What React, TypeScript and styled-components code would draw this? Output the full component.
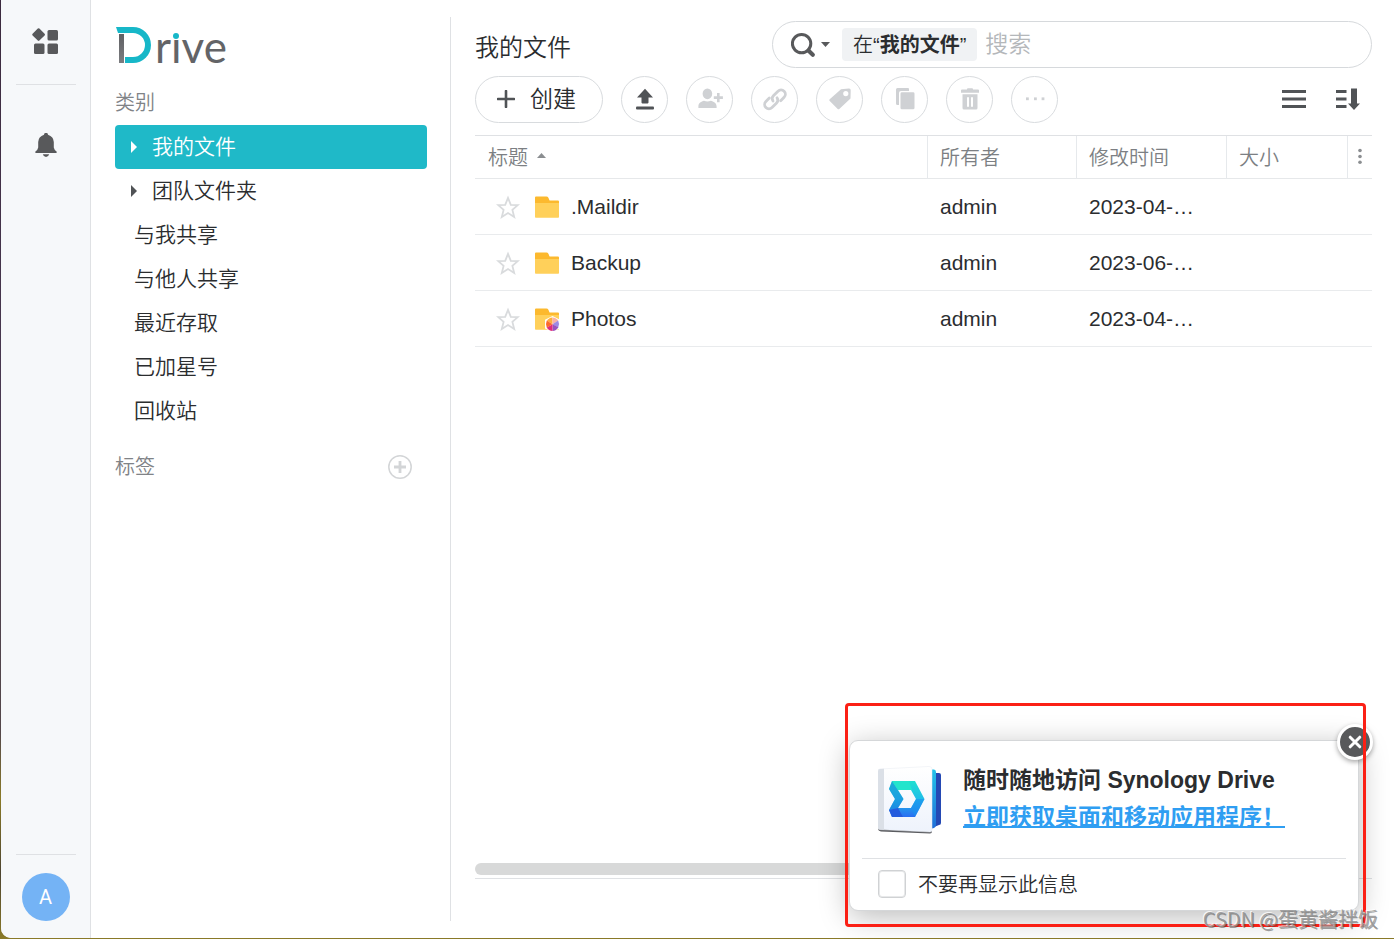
import React, { useState } from "react";
import styled, { createGlobalStyle } from "styled-components";

const GlobalStyle = createGlobalStyle`
  *, *::before, *::after { box-sizing: border-box; }
  body {
    margin: 0;
    background: linear-gradient(180deg, #3b2a3e 0%, #4a3a52 45%, #54484a 78%, #8a7a28 85%, #4d4430 93%, #8a7a28 100%);
    color: #2b2d2f;
    font-family: "Liberation Sans", "Noto Sans CJK SC", sans-serif;
    font-size: 21px;
    font-weight: 350;
  }
  button, input { font: inherit; color: inherit; }
  button { padding: 0; border: 0; background: none; cursor: pointer; }
  button:disabled { cursor: default; }
  svg { display: block; flex: none; }
`;

const Desktop = styled.div`
  display: flex;
  min-height: 100vh;
  padding: 0 0 1px 1px;
`;

const Window = styled.div`
  position: relative;
  display: flex;
  flex: 1;
  min-width: 0;
  overflow: hidden;
  background: #fff;
  border-bottom-left-radius: 10px;
`;

const Rail = styled.nav`
  display: flex;
  flex: none;
  flex-direction: column;
  align-items: center;
  width: 90px;
  padding: 28px 0 17px;
  background: #f6f8fa;
  border-right: 1px solid #dfe1e4;
`;

const RailButton = styled.button`
  display: grid;
  place-items: center;
`;

const RailDivider = styled.hr<{ $below: number }>`
  width: 60px;
  margin: 0 0 ${(p) => p.$below}px;
  border: 0;
  border-top: 1px solid #dfe1e4;
`;

const RailTop = styled.div`
  display: flex;
  flex: 1;
  flex-direction: column;
  align-items: center;
  ${RailButton}:first-child { margin-bottom: 30px; }
`;

const Avatar = styled.button`
  width: 48px;
  height: 48px;
  border-radius: 50%;
  background: #74b3f5;
  color: #fff;
  font-family: Roboto, "Liberation Sans", sans-serif;
  font-size: 20px;
  font-weight: 400;
`;

const Sidebar = styled.aside`
  flex: none;
  width: 360px;
  margin: 17px 0;
  padding: 8px 23px 0 24px;
  border-right: 1px solid #dfe1e4;
`;

const Logo = styled.svg`
  width: 116px;
  height: 44px;
  overflow: visible;
`;

const SectionLabel = styled.h2`
  margin: 0;
  color: #808387;
  font-size: 20px;
  font-weight: 350;
  line-height: 44px;
`;

const CategoryLabel = styled(SectionLabel)`
  margin-top: 12px;
`;

const NavList = styled.ul`
  margin: 0 0 12px;
  padding: 0;
  list-style: none;
`;

const NavItem = styled.button<{ $active?: boolean; $expandable?: boolean }>`
  display: flex;
  gap: 15px;
  align-items: center;
  width: 100%;
  height: 44px;
  padding-left: ${(p) => (p.$expandable ? 16 : 19)}px;
  border-radius: 4px;
  background: ${(p) => (p.$active ? "#1fb9c8" : "transparent")};
  color: ${(p) => (p.$active ? "#fff" : "inherit")};
  text-align: left;
  svg { fill: ${(p) => (p.$active ? "#fff" : "#505356")}; }
`;

const ButtonText = styled.span`
  padding-bottom: 4px;
`;

const TagHeader = styled.div`
  display: flex;
  align-items: center;
  justify-content: space-between;
  padding-right: 15px;
`;

const Main = styled.main`
  display: flex;
  flex: 1;
  flex-direction: column;
  min-width: 0;
  padding: 21px 22px 59px 24px;
`;

const TitleBar = styled.header`
  display: flex;
  align-items: center;
  justify-content: space-between;
  gap: 24px;
`;

const Title = styled.h1`
  margin: 0;
  padding-top: 6px;
  font-size: 24px;
  font-weight: 350;
  line-height: 41px;
  white-space: nowrap;
`;

const Search = styled.form`
  display: flex;
  align-items: center;
  flex: 0 1 600px;
  min-width: 0;
  height: 47px;
  padding: 0 18px;
  border: 1px solid #d6d9dc;
  border-radius: 24px;
`;

const SearchMode = styled.button`
  display: flex;
  gap: 4px;
  align-items: center;
`;

const Scope = styled.span`
  margin-left: 12px;
  padding: 1px 11px 0;
  border-radius: 4px;
  background: #f0f2f4;
  font-size: 20px;
  line-height: 32px;
  white-space: nowrap;
  b { font-weight: 700; }
`;

const SearchInput = styled.input`
  flex: 1;
  min-width: 0;
  padding: 0 8px;
  border: 0;
  outline: 0;
  background: none;
  font-size: 23px;
  &::placeholder { color: #b4b7ba; opacity: 1; }
`;

const Toolbar = styled.div`
  display: flex;
  gap: 18px;
  align-items: center;
  margin: 8px 0 12px;
`;

const ToolButton = styled.button`
  display: grid;
  place-items: center;
  flex: none;
  width: 47px;
  height: 47px;
  border: 1px solid #d8dbde;
  border-radius: 50%;
  color: #505356;
  &:disabled { color: #cfd1d4; }
`;

const CreateButton = styled.button`
  display: flex;
  gap: 15px;
  align-items: center;
  height: 47px;
  padding: 0 26px 2px 21px;
  border: 1px solid #d8dbde;
  border-radius: 24px;
  font-size: 23px;
`;

const ViewButtons = styled.div`
  display: flex;
  gap: 30px;
  margin-left: auto;
  padding-right: 12px;
`;

const FilePane = styled.section`
  flex: 1;
  min-width: 0;
`;

const FileTable = styled.table`
  width: 100%;
  border-spacing: 0;
  border-top: 1px solid #dfe1e4;
  table-layout: fixed;
`;

const Col = styled.col<{ $width?: number }>`
  width: ${(p) => (p.$width ? `${p.$width}px` : "auto")};
`;

const HeadCell = styled.th`
  height: 43px;
  padding: 0 0 2px 12px;
  border-right: 1px solid #e6e9ec;
  border-bottom: 1px solid #e6e8ea;
  color: #7c7f83;
  font-size: 20px;
  font-weight: 350;
  text-align: left;
  &:first-child { padding-left: 13px; }
  &:last-child { padding-left: 9px; border-right: 0; }
`;

const SortButton = styled.button`
  display: flex;
  gap: 9px;
  align-items: center;
  svg { margin-bottom: 2px; }
`;

const ColumnsButton = styled.button`
  display: block;
`;

const Cell = styled.td`
  height: 56px;
  padding: 0 12px;
  overflow: hidden;
  border-bottom: 1px solid #e9ebed;
  text-overflow: ellipsis;
  white-space: nowrap;
  &:first-child { padding-left: 21px; }
`;

const FileName = styled.div`
  display: flex;
  align-items: center;
`;

const StarButton = styled.button`
  margin-right: 15px;
`;

const FileLabel = styled.span`
  margin-left: 11px;
`;

const ScrollTrack = styled.div`
  height: 16px;
  border-bottom: 1px solid #dfe1e4;
`;

const ScrollThumb = styled.div`
  width: 84%;
  height: 12px;
  border-radius: 6px;
  background: #d8d9d9;
`;

const Popup = styled.aside`
  position: absolute;
  right: 35px;
  bottom: 27px;
  width: 510px;
  padding: 0 12px;
  border: 1px solid #d5d7d9;
  border-radius: 9px;
  background: #fff;
  box-shadow: 0 6px 30px rgba(0, 0, 0, 0.27);
`;

const PopupBody = styled.div`
  display: flex;
  gap: 20px;
  padding: 21px 16px 22px;
  border-bottom: 1px solid #dfe1e4;
`;

const PopupText = styled.div`
  font-size: 23px;
  font-weight: 700;
  line-height: 37px;
  white-space: nowrap;
  p { margin: 0; }
  a {
    color: #2f9ef2;
    text-decoration: underline;
    text-decoration-thickness: 2px;
    text-underline-offset: 1px;
    text-decoration-skip-ink: none;
  }
`;

const DismissLabel = styled.label`
  display: flex;
  gap: 12px;
  align-items: center;
  height: 51px;
  padding: 0 0 2px 16px;
  font-size: 20px;
`;

const CheckBox = styled.input`
  appearance: none;
  width: 28px;
  height: 28px;
  margin: 0;
  border: 1px solid #d0d2d4;
  border-radius: 4px;
  background: #fff;
  box-shadow: inset 0 0 0 1px #e8e9ea;
  &:checked { background: #1fb9c8; }
`;

const CloseButton = styled.button`
  position: absolute;
  top: -17px;
  right: -15px;
  display: grid;
  place-items: center;
  width: 36px;
  height: 36px;
  border: 3px solid #fff;
  border-radius: 50%;
  background: #58595b;
  box-shadow: 0 2px 5px rgba(0, 0, 0, 0.35);
`;

const Highlight = styled.div`
  position: absolute;
  right: 28px;
  bottom: 11px;
  width: 521px;
  height: 224px;
  border: 3px solid #fb2015;
  border-radius: 4px;
  pointer-events: none;
`;

const Watermark = styled.span`
  position: absolute;
  right: 16px;
  bottom: 5px;
  color: rgba(150, 150, 150, 0.85);
  font-family: "Noto Sans CJK SC", sans-serif;
  font-size: 20px;
  line-height: 28px;
  text-shadow: 1px 1px 0 rgba(70, 70, 70, 0.5), -1px -1px 0 rgba(255, 255, 255, 0.8);
  pointer-events: none;
`;

const DriveLogo = () => (
  <Logo viewBox="115 25 116 44" role="img" aria-label="Drive">
    <defs>
      <linearGradient id="stem" x1="0" y1="0" x2="0" y2="1">
        <stop offset="0" stopColor="#606164" />
        <stop offset="1" stopColor="#7b7c80" />
      </linearGradient>
    </defs>
    <rect x="119" y="34" width="5" height="29" fill="url(#stem)" />
    <path d="M116 27H133A18 18 0 0 1 133 63H125V57H133A12 12 0 0 0 133 33H118Z" fill="#17b7c8" />
    <text x="155" y="63" fill="#636467" fontFamily="Lato" fontSize="44" fontWeight="400">rive</text>
    <rect x="168" y="26" width="14" height="13" fill="#fff" />
    <circle cx="176" cy="36" r="3" fill="#17b7c8" />
  </Logo>
);

const AppsIcon = () => (
  <svg width="28" height="26" viewBox="0 0 28 26" fill="#58595b">
    <path d="M5.8.6Q6.6-.2 7.4.6L12.6 5.8Q13.4 6.6 12.6 7.4L7.4 12.6Q6.6 13.4 5.8 12.6L.6 7.4Q-.2 6.6.6 5.8Z" />
    <rect x="15.5" y="2" width="10.5" height="10.5" rx="1.5" />
    <rect x="2" y="15.5" width="10.5" height="10.5" rx="1.5" />
    <rect x="15.5" y="15.5" width="10.5" height="10.5" rx="1.5" />
  </svg>
);

const BellIcon = () => (
  <svg width="22" height="24" viewBox="0 0 22 24" fill="#58595b">
    <path d="M9 1.8A2 2 0 0 1 13 1.8Q18.6 3.6 18.8 9V14.5Q19.2 17 21.6 18.4V20H.4V18.4Q2.8 17 3.2 14.5V9Q3.4 3.6 9 1.8Z" />
    <path d="M7.8 21.2H14.2Q13.4 23.9 11 23.9Q8.6 23.9 7.8 21.2Z" />
  </svg>
);

const Caret = () => (
  <svg width="6" height="12" viewBox="0 0 6 12"><path d="M0 0L6 6L0 12Z" /></svg>
);

const AddTagIcon = () => (
  <svg width="24" height="24" viewBox="0 0 24 24" fill="none" stroke="#d3d5d7">
    <circle cx="12" cy="12" r="11.2" strokeWidth="1.5" />
    <path d="M12 6V18M6 12H18" strokeWidth="2.8" />
  </svg>
);

const SearchIcon = () => (
  <svg width="26" height="26" viewBox="0 0 26 26" fill="none" stroke="#58595b">
    <circle cx="10.6" cy="11.6" r="9.2" strokeWidth="3" />
    <path d="M17.4 18.6L21.8 22.8" strokeWidth="4.2" strokeLinecap="round" />
  </svg>
);

const DownIcon = () => (
  <svg width="9" height="5" viewBox="0 0 9 5"><path d="M0 0H9L4.5 5Z" fill="#58595b" /></svg>
);

const PlusIcon = () => (
  <svg width="18" height="18" viewBox="0 0 18 18">
    <path d="M9 1V17M1 9H17" stroke="#505356" strokeWidth="2.6" strokeLinecap="round" />
  </svg>
);

const UploadIcon = () => (
  <svg width="24" height="24" viewBox="0 0 24 24" fill="currentColor">
    <path d="M12 .8L20 9.4H15.5V14.6Q15.5 15.4 14.7 15.4H9.3Q8.5 15.4 8.5 14.6V9.4H4Z" />
    <rect x="3" y="18.5" width="18" height="2.9" rx="1" />
  </svg>
);

const ShareIcon = () => (
  <svg width="26" height="24" viewBox="0 0 26 24" fill="currentColor">
    <ellipse cx="10.4" cy="5.8" rx="4.8" ry="5.4" />
    <path d="M1.4 20V18.5C1.4 14.8 4.4 13.6 7 12.8Q10.4 14.2 13.8 12.8C16.4 13.6 19.6 14.8 19.6 18.5V20Z" />
    <path d="M21.3 5V14.2M16.8 9.6H25.9" stroke="currentColor" strokeWidth="2.6" />
  </svg>
);

const LinkIcon = () => (
  <svg width="24" height="24" viewBox="0 0 24 24" fill="none" stroke="currentColor" strokeWidth="2.8" strokeLinecap="round">
    <path d="M10 13C8.7 11.1 9 9.2 10.4 7.8L15 3.2A4.3 4.3 0 0 1 21.1 9.3L17.7 12.7" />
    <path d="M14 9.8C15.3 11.7 15 13.6 13.6 15L9 19.6A4.3 4.3 0 0 1 2.9 13.5L6.3 10.1" />
  </svg>
);

const TagIcon = () => (
  <svg width="24" height="24" viewBox="0 0 24 24">
    <path fill="currentColor" fillRule="evenodd" d="M13 1.3L20.8.4Q22.8.2 22.7 2.2L22.5 10.5L11.3 21Q10.5 21.6 9.7 20.9L1.5 12.8Q.9 12 1.7 11.3ZM17.8 3A2.6 2.6 0 1 0 17.8 8.2A2.6 2.6 0 1 0 17.8 3Z" />
  </svg>
);

const CopyIcon = () => (
  <svg width="24" height="24" viewBox="0 0 24 24" fill="currentColor">
    <path d="M4.5 0H15Q16 0 16 1V3H8Q6 3 6 5V17H4.5Q3 17 3 15.5V1.5Q3 0 4.5 0Z" />
    <rect x="7.5" y="4.3" width="14" height="17" rx="1.4" />
  </svg>
);

const TrashIcon = () => (
  <svg width="24" height="24" viewBox="0 0 24 24" fill="currentColor">
    <path d="M9 1.6V1Q9 .2 10 .2H14Q15 .2 15 1V1.6H20Q21 1.6 21 2.6V4.8H3V2.6Q3 1.6 4 1.6Z" />
    <path fillRule="evenodd" d="M4.5 6.2H19.5V20Q19.5 21.5 18 21.5H6Q4.5 21.5 4.5 20ZM9 9.2V18.7H11V9.2ZM13 9.2V18.7H15V9.2Z" />
  </svg>
);

const MoreIcon = () => (
  <svg width="24" height="24" viewBox="0 0 24 24" fill="currentColor">
    <rect x="3" y="9.4" width="2.8" height="2.8" />
    <rect x="11" y="9.4" width="2.8" height="2.8" />
    <rect x="18.6" y="9.4" width="2.8" height="2.8" />
  </svg>
);

const ListIcon = () => (
  <svg width="24" height="24" viewBox="0 0 24 24" fill="#505356">
    <path d="M0 2H24V5H0ZM0 9.5H24V12.5H0ZM0 17H24V20H0Z" />
  </svg>
);

const SortIcon = () => (
  <svg width="24" height="24" viewBox="0 0 24 24" fill="#505356">
    <path d="M0 2H10.5V5H0ZM0 9.5H10.5V12.5H0ZM0 17H10.5V20H0Z" />
    <path d="M15 .5H21V15.5H24L18 22L12 15.5H15Z" />
  </svg>
);

const SortUp = () => (
  <svg width="9" height="5" viewBox="0 0 9 5"><path d="M0 5H9L4.5 0Z" fill="#8b8e91" /></svg>
);

const DotsIcon = () => (
  <svg width="6" height="16" viewBox="0 0 6 16" fill="#8b8e91">
    <circle cx="3" cy="2.5" r="1.8" />
    <circle cx="3" cy="8.5" r="1.8" />
    <circle cx="3" cy="14.2" r="1.8" />
  </svg>
);

const StarIcon = () => (
  <svg width="24" height="24" viewBox="0 0 24 24" fill="none" stroke="#d9dbdd" strokeWidth="1.8">
    <path d="M12 2.8L14.8 9.8L21.8 10.1L16.4 14.9L18.2 22L12 18L5.8 22L7.6 14.9L2.2 10.1L9.2 9.8Z" />
  </svg>
);

const FolderIcon = ({ photos }: { photos?: boolean }) => (
  <svg width="25" height="24" viewBox="0 0 25 24">
    <path d="M0 2.6Q0 1.6 1 1.6H11.4Q12.8 1.6 13.4 2.8L14.6 5.4H23Q24 5.4 24 6.4V12H0Z" fill="#fcb92e" />
    <path d="M0 8H24V22Q24 22.8 23.2 22.8H.8Q0 22.8 0 22Z" fill="#ffd05a" />
    {photos && (
      <g>
        <path d="M17.5 9L25 12.8V21.4L17.5 24.5L10 21.4V12.8Z" fill="#fff" />
        <path d="M17.5 17.2L12 13.7Q13.6 10.6 17.5 10.4Z" fill="#ffad3b" />
        <path d="M17.5 17.2V10.4Q21.6 10.6 23.2 13.7Z" fill="#f8b2a6" />
        <path d="M17.5 17.2L23.2 13.5Q25 17 23.2 20.4Z" fill="#9d8ae4" />
        <path d="M17.5 17.2L23.4 20.2Q21.4 23.6 17.5 24Z" fill="#9953bd" />
        <path d="M17.5 17.2V24Q13.6 23.6 11.8 20.4Z" fill="#df2d7b" />
        <path d="M17.5 17.2L11.8 20.7Q10.2 17 11.8 13.5Z" fill="#fb6a2c" />
      </g>
    )}
  </svg>
);

const DriveAppIcon = () => (
  <svg width="65" height="74" viewBox="0 0 65 74">
    <defs>
      <linearGradient id="ribbon" x1="0" y1="0" x2="0" y2="1">
        <stop offset="0" stopColor="#1fe0d0" />
        <stop offset=".5" stopColor="#1fbde9" />
        <stop offset="1" stopColor="#2a6df2" />
      </linearGradient>
      <linearGradient id="page" x1="0" y1="0" x2="0" y2="1">
        <stop offset="0" stopColor="#fff" />
        <stop offset="1" stopColor="#eef3fc" />
      </linearGradient>
      <linearGradient id="sheet" x1="0" y1="0" x2="0" y2="1">
        <stop offset="0" stopColor="#22c4ea" />
        <stop offset="1" stopColor="#1f6ed8" />
      </linearGradient>
    </defs>
    <path d="M56 11H61Q63 11 63 13V61Q63 63 61 63L56 65Z" fill="#2449b4" />
    <path d="M52 7.5H56Q58 7.5 58 10V63Q58 65 56 66L52 67Z" fill="url(#sheet)" />
    <path d="M0 66L52 69L54 69Q54 71.5 52 71.5L3 69.5Q0 69 0 66Z" fill="#5b5c60" />
    <path d="M0 9Q0 7 2 7L51 4.5Q54 4.5 54 7V68Q54 70 52 70L2 67.6Q0 67.6 0 65.6Z" fill="url(#page)" stroke="#e6eaf0" strokeWidth=".5" />
    <path d="M0 9Q0 7 2 7L6 6.8V67.8L2 67.6Q0 67.6 0 65.6Z" fill="#dbe0e7" />
    <path fillRule="evenodd" d="M14 19H37L46.5 37L37 55H14L11 48L17 37L11 27ZM20 28L25.5 37L20 46H33L38 37L33 28Z" fill="url(#ribbon)" />
    <path d="M14 19L11 27L17 37L11 48L20 46L25.5 37Z" fill="#1687da" opacity=".55" />
    <path d="M14 19H31L34 28H20Z" fill="#23e5cc" />
    <path d="M11 48L20 46L25 55H14Z" fill="#245bdd" />
    <path d="M37 55L46.5 37L38 37L33 46Z" fill="#1b91ee" opacity=".6" />
  </svg>
);

const CloseIcon = () => (
  <svg width="14" height="14" viewBox="0 0 14 14">
    <path d="M2.2 2.2L11.8 11.8M11.8 2.2L2.2 11.8" stroke="#fff" strokeWidth="3" strokeLinecap="round" />
  </svg>
);

const categories = [
  { name: "我的文件", expandable: true },
  { name: "团队文件夹", expandable: true },
  { name: "与我共享" },
  { name: "与他人共享" },
  { name: "最近存取" },
  { name: "已加星号" },
  { name: "回收站" },
];

const files = [
  { name: ".Maildir", owner: "admin", modified: "2023-04-…" },
  { name: "Backup", owner: "admin", modified: "2023-06-…" },
  { name: "Photos", owner: "admin", modified: "2023-04-…", photos: true },
];

const tools = [
  { label: "上传", icon: <UploadIcon />, enabled: true },
  { label: "共享", icon: <ShareIcon /> },
  { label: "链接", icon: <LinkIcon /> },
  { label: "标签", icon: <TagIcon /> },
  { label: "复制", icon: <CopyIcon /> },
  { label: "删除", icon: <TrashIcon /> },
  { label: "更多", icon: <MoreIcon /> },
];

export default function App() {
  const [active, setActive] = useState("我的文件");
  const [open, setOpen] = useState(true);

  return (
    <Desktop>
      <GlobalStyle />
      <Window>
        <Rail>
          <RailTop>
            <RailButton aria-label="应用程序"><AppsIcon /></RailButton>
            <RailDivider $below={48} />
            <RailButton aria-label="通知"><BellIcon /></RailButton>
          </RailTop>
          <RailDivider $below={18} />
          <Avatar>A</Avatar>
        </Rail>

        <Sidebar>
          <DriveLogo />
          <CategoryLabel>类别</CategoryLabel>
          <NavList>
            {categories.map((c) => (
              <li key={c.name}>
                <NavItem $active={c.name === active} $expandable={c.expandable} onClick={() => setActive(c.name)}>
                  {c.expandable && <Caret />}
                  <ButtonText>{c.name}</ButtonText>
                </NavItem>
              </li>
            ))}
          </NavList>
          <TagHeader>
            <SectionLabel>标签</SectionLabel>
            <button aria-label="新增标签"><AddTagIcon /></button>
          </TagHeader>
        </Sidebar>

        <Main>
          <TitleBar>
            <Title>我的文件</Title>
            <Search onSubmit={(e) => e.preventDefault()}>
              <SearchMode type="button" aria-label="搜索选项"><SearchIcon /><DownIcon /></SearchMode>
              <Scope>在“<b>我的文件</b>”</Scope>
              <SearchInput aria-label="搜索" placeholder="搜索" />
            </Search>
          </TitleBar>

          <Toolbar>
            <CreateButton><PlusIcon /><ButtonText>创建</ButtonText></CreateButton>
            {tools.map((t) => (
              <ToolButton key={t.label} aria-label={t.label} disabled={!t.enabled}>{t.icon}</ToolButton>
            ))}
            <ViewButtons>
              <button aria-label="列表视图"><ListIcon /></button>
              <button aria-label="排序"><SortIcon /></button>
            </ViewButtons>
          </Toolbar>

          <FilePane>
            <FileTable>
              <colgroup>
                <Col />
                <Col $width={149} />
                <Col $width={150} />
                <Col $width={121} />
                <Col $width={24} />
              </colgroup>
              <thead>
                <tr>
                  <HeadCell><SortButton>标题<SortUp /></SortButton></HeadCell>
                  <HeadCell>所有者</HeadCell>
                  <HeadCell>修改时间</HeadCell>
                  <HeadCell>大小</HeadCell>
                  <HeadCell><ColumnsButton aria-label="选择列"><DotsIcon /></ColumnsButton></HeadCell>
                </tr>
              </thead>
              <tbody>
                {files.map((f) => (
                  <tr key={f.name}>
                    <Cell>
                      <FileName>
                        <StarButton aria-label="加星号"><StarIcon /></StarButton>
                        <FolderIcon photos={f.photos} />
                        <FileLabel>{f.name}</FileLabel>
                      </FileName>
                    </Cell>
                    <Cell>{f.owner}</Cell>
                    <Cell>{f.modified}</Cell>
                    <Cell />
                    <Cell />
                  </tr>
                ))}
              </tbody>
            </FileTable>
          </FilePane>
          <ScrollTrack><ScrollThumb /></ScrollTrack>
        </Main>

        {open && (
          <Popup>
            <PopupBody>
              <DriveAppIcon />
              <PopupText>
                <p>随时随地访问 Synology Drive</p>
                <p><a href="#apps">立即获取桌面和移动应用程序！</a></p>
              </PopupText>
            </PopupBody>
            <DismissLabel>
              <CheckBox type="checkbox" />
              不要再显示此信息
            </DismissLabel>
            <CloseButton aria-label="关闭" onClick={() => setOpen(false)}><CloseIcon /></CloseButton>
          </Popup>
        )}
        <Highlight />
        <Watermark>CSDN @蛋黄酱拌饭</Watermark>
      </Window>
    </Desktop>
  );
}
